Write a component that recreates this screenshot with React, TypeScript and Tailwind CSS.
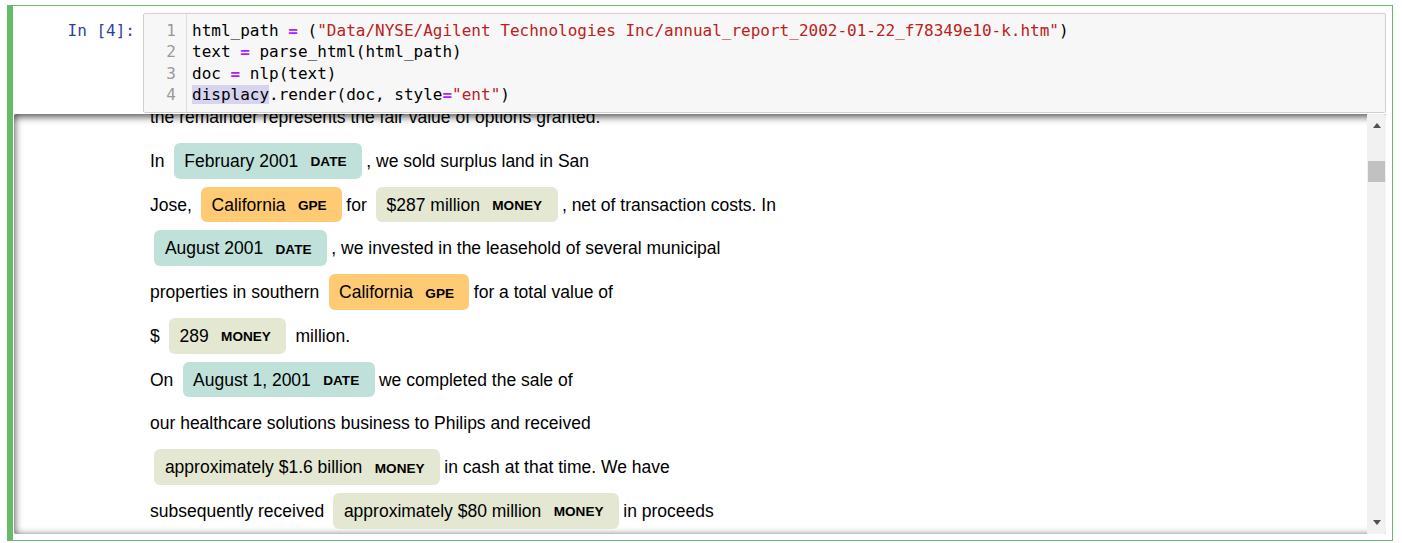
import React from "react";

const mono = "font-['DejaVu_Sans_Mono',monospace]";

const ENT_BG: Record<string, string> = {
  DATE: "bg-[#bfe1d9]",
  GPE: "bg-[#feca74]",
  MONEY: "bg-[#e4e7d2]",
};

function Ent({ text, label }: { text: string; label: "DATE" | "GPE" | "MONEY" }) {
  return (
    <mark
      className={`${ENT_BG[label]} text-black px-[0.6em] py-[0.45em] mx-[0.25em] leading-none rounded-[0.35em]`}
    >
      {text}{" "}
      <span className="text-[13.6px] font-bold leading-none align-middle ml-[7.5px] uppercase">
        {label}
      </span>{" "}
    </mark>
  );
}

function Op({ children }: { children: React.ReactNode }) {
  return <span className="text-[#aa22ff] font-bold">{children}</span>;
}

function Str({ children }: { children: React.ReactNode }) {
  return <span className="text-[#ba2121]">{children}</span>;
}

const codeLines: React.ReactNode[] = [
  <>
    html_path <Op>=</Op> (<Str>"Data/NYSE/Agilent Technologies Inc/annual_report_2002-01-22_f78349e10-k.htm"</Str>)
  </>,
  <>
    text <Op>=</Op> parse_html(html_path)
  </>,
  <>
    doc <Op>=</Op> nlp(text)
  </>,
  <>
    <span className="bg-[#d7d4f0]">displacy</span>.render(doc, style<Op>=</Op>
    <Str>"ent"</Str>)
  </>,
];

function Arrow({ up }: { up?: boolean }) {
  return (
    <svg width="8" height="5" viewBox="0 0 8 5" className="block">
      <polygon points={up ? "0,5 8,5 4,0" : "0,0 8,0 4,5"} fill="#505050" />
    </svg>
  );
}

export default function App() {
  return (
    <div className="bg-white w-[1402px] h-[543px] pt-[5px] pl-[7px] font-['Liberation_Sans',Arial,sans-serif]">
      <div className="w-[1386px] h-[536px] border border-[#66bb6a] border-l-[6px] pt-[7px] pl-px pr-[6px] pb-[6px] flex flex-col">
        {/* input */}
        <div className="flex h-[100px] shrink-0">
          <div
            className={`${mono} w-[129px] shrink-0 text-right pr-[8px] pt-[7px] text-[16px] leading-[21.4px] text-[#303f9f]`}
          >
            In [4]:
          </div>
          <div className="flex flex-1 border border-[#cfcfcf] bg-[#f7f7f7] rounded-[2px]">
            <div
              className={`${mono} w-[43px] shrink-0 border-r border-[#dddddd] text-right pr-[10px] py-[6px] text-[16px] leading-[21.4px] text-[#999999]`}
            >
              {codeLines.map((_, i) => (
                <div key={i}>{i + 1}</div>
              ))}
            </div>
            <div className={`${mono} pl-[5px] py-[6px] text-[16px] leading-[21.4px] text-black whitespace-pre`}>
              {codeLines.map((l, i) => (
                <div key={i}>{l}</div>
              ))}
            </div>
          </div>
        </div>

        {/* output */}
        <div className="mt-px flex flex-1 rounded-[2px] shadow-[inset_0_2px_8px_rgba(0,0,0,0.8)] overflow-hidden">
          <div className="flex-1 overflow-hidden pl-[136px]">
            <div className="-mt-[18px] text-[17.5px] leading-[2.5] text-black">
              <div>the remainder represents the fair value of options granted.</div>
              <div>
                In <Ent text="February 2001" label="DATE" />, we sold surplus land in San
              </div>
              <div>
                Jose, <Ent text="California" label="GPE" />for <Ent text="$287 million" label="MONEY" />, net of
                transaction costs. In
              </div>
              <div>
                <Ent text="August 2001" label="DATE" />, we invested in the leasehold of several municipal
              </div>
              <div>
                properties in southern <Ent text="California" label="GPE" />for a total value of
              </div>
              <div>
                $ <Ent text="289" label="MONEY" />
                {"\u00a0"}million.
              </div>
              <div>
                On <Ent text="August 1, 2001" label="DATE" />we completed the sale of
              </div>
              <div>our healthcare solutions business to Philips and received</div>
              <div>
                <Ent text="approximately $1.6 billion" label="MONEY" />in cash at that time. We have
              </div>
              <div>
                subsequently received <Ent text="approximately $80 million" label="MONEY" />in proceeds
              </div>
            </div>
          </div>
          {/* scrollbar */}
          <div className="w-[19px] shrink-0 bg-[#f1f1f1] flex flex-col">
            <div className="h-[22px] flex items-center justify-center">
              <Arrow up />
            </div>
            <div className="flex-1 px-px">
              <div className="mt-[25px] h-[21px] bg-[#c1c1c1]" />
            </div>
            <div className="h-[24px] flex items-center justify-center">
              <Arrow />
            </div>
          </div>
        </div>
      </div>
    </div>
  );
}
